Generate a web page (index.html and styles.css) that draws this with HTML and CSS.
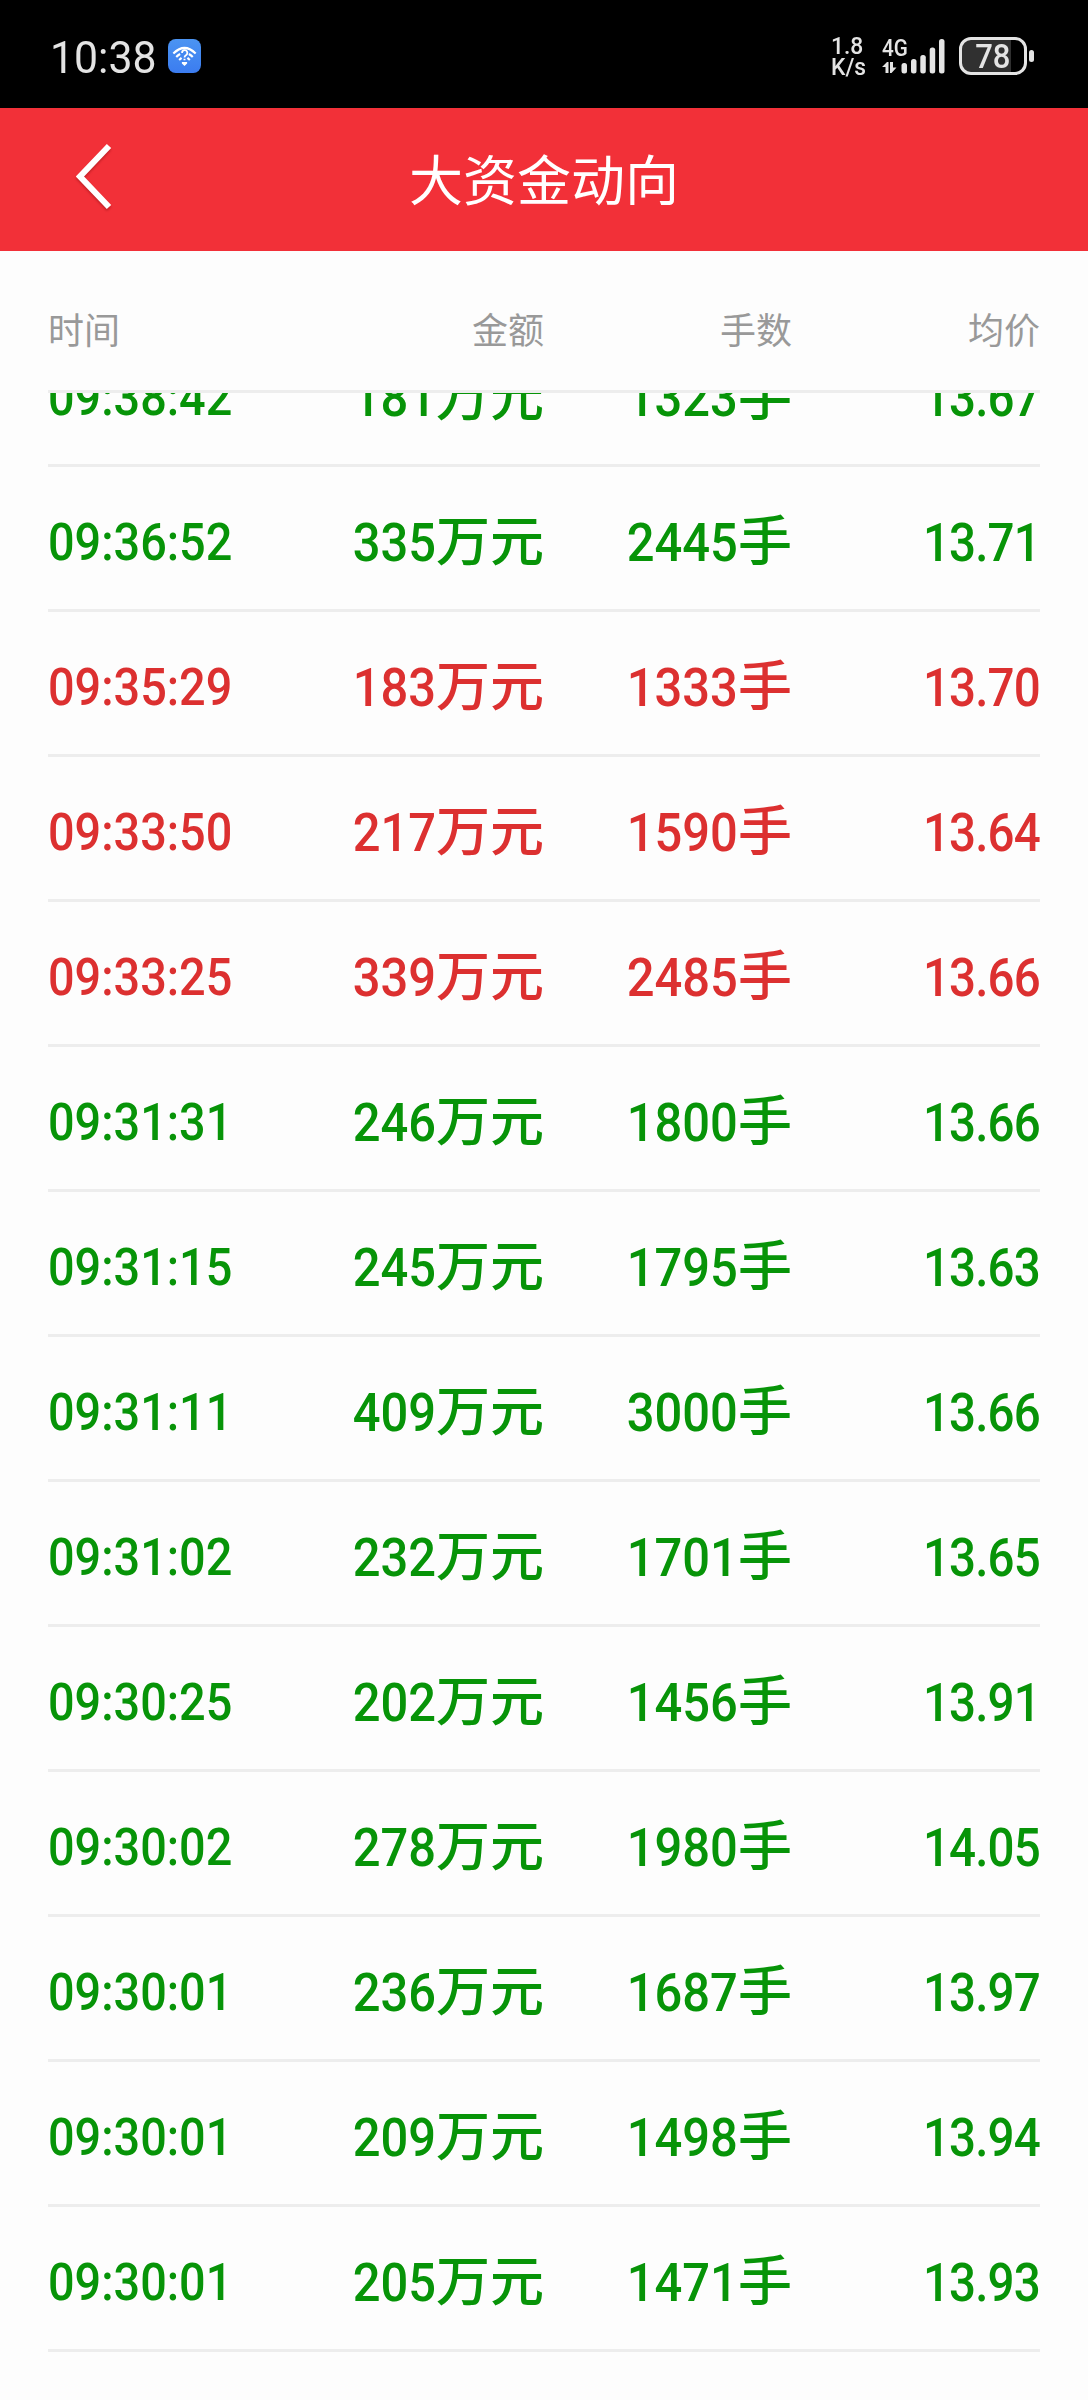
FILE: index.html
```html
<!DOCTYPE html>
<html lang="zh-CN">
<head>
<meta charset="utf-8">
<title>大资金动向</title>
<link rel="stylesheet" href="styles.css">
</head>
<body>
<div class="status">
  <div class="clock"><span>10:38</span></div>
  <svg class="wifi" width="33" height="34" viewBox="0 0 34 34" preserveAspectRatio="none">
    <defs><linearGradient id="g" x1="0" y1="0" x2="0" y2="1"><stop offset="0" stop-color="#4b94f2"/><stop offset="1" stop-color="#3b7cf0"/></linearGradient></defs>
    <rect width="34" height="34" rx="8" fill="url(#g)"/>
    <g fill="none" stroke="#fff" stroke-width="2.2">
      <path d="M5.500 14.500Q17 3.500 28.500 14.500"/>
      <path d="M8.500 18Q10.500 16 12.500 15M25.500 18Q23.500 16 21.500 15"/>
      <path d="M11.500 21L14 18.800M22.500 21L20 18.800"/>
      <path d="M14.500 14a2.700 2.700 0 1 1 4 2.200q-1.500 .8-1.500 2.300" stroke-width="1.800"/>
    </g>
    <path d="M16 19.800h2v1.500h-2zM14.300 23h5.400v1.500L17 27l-2.700-2.500z" fill="#fff"/>
  </svg>
  <div class="speed"><span>1.8</span><span>K/s</span></div>
  <div class="signal">
    <span class="net">4G</span>
    <svg width="64" height="37" viewBox="0 0 64 37">
      <g fill="#e4e4e4">
        <path d="M0 29L5 24H6.500V35H3.500V29zM14.500 29.500L9.500 35H8V24H11V29.500z"/>
        <rect x="19.500" y="25" width="5.500" height="10.500" rx="2.500"/>
        <rect x="29" y="21" width="5.500" height="14.500" rx="2.500"/>
        <rect x="38.300" y="17" width="5.500" height="18.500" rx="2.500"/>
        <rect x="47.700" y="9.500" width="5.500" height="26" rx="2.500"/>
        <rect x="57" y="1" width="5.500" height="34.500" rx="2.500"/>
      </g>
    </svg>
  </div>
  <div class="battery"><div class="cell"><span>78</span></div><i class="nub"></i></div>
</div>
<header class="nav">
  <svg class="back" width="36" height="68" viewBox="0 0 36 68"><path d="M33 3L4 33.500L33 64" fill="none" stroke="#fff" stroke-width="6"/></svg>
  <h1>大资金动向</h1>
</header>
<div class="grid head"><span>时间</span><span>金额</span><span>手数</span><span>均价</span></div>
<main class="list">
  <div class="grid row down"><span class="t">09:38:42</span><span><b>181</b>万元</span><span><b>1323</b>手</span><span><b class="p">13.67</b></span></div>
  <div class="grid row down"><span class="t">09:36:52</span><span><b>335</b>万元</span><span><b>2445</b>手</span><span><b class="p">13.71</b></span></div>
  <div class="grid row up"><span class="t">09:35:29</span><span><b>183</b>万元</span><span><b>1333</b>手</span><span><b class="p">13.70</b></span></div>
  <div class="grid row up"><span class="t">09:33:50</span><span><b>217</b>万元</span><span><b>1590</b>手</span><span><b class="p">13.64</b></span></div>
  <div class="grid row up"><span class="t">09:33:25</span><span><b>339</b>万元</span><span><b>2485</b>手</span><span><b class="p">13.66</b></span></div>
  <div class="grid row down"><span class="t">09:31:31</span><span><b>246</b>万元</span><span><b>1800</b>手</span><span><b class="p">13.66</b></span></div>
  <div class="grid row down"><span class="t">09:31:15</span><span><b>245</b>万元</span><span><b>1795</b>手</span><span><b class="p">13.63</b></span></div>
  <div class="grid row down"><span class="t">09:31:11</span><span><b>409</b>万元</span><span><b>3000</b>手</span><span><b class="p">13.66</b></span></div>
  <div class="grid row down"><span class="t">09:31:02</span><span><b>232</b>万元</span><span><b>1701</b>手</span><span><b class="p">13.65</b></span></div>
  <div class="grid row down"><span class="t">09:30:25</span><span><b>202</b>万元</span><span><b>1456</b>手</span><span><b class="p">13.91</b></span></div>
  <div class="grid row down"><span class="t">09:30:02</span><span><b>278</b>万元</span><span><b>1980</b>手</span><span><b class="p">14.05</b></span></div>
  <div class="grid row down"><span class="t">09:30:01</span><span><b>236</b>万元</span><span><b>1687</b>手</span><span><b class="p">13.97</b></span></div>
  <div class="grid row down"><span class="t">09:30:01</span><span><b>209</b>万元</span><span><b>1498</b>手</span><span><b class="p">13.94</b></span></div>
  <div class="grid row down"><span class="t">09:30:01</span><span><b>205</b>万元</span><span><b>1471</b>手</span><span><b class="p">13.93</b></span></div>
</main>
</body>
</html>
```
FILE: styles.css
```css
* { box-sizing: border-box; }
body {
  margin: 0;
  width: 1088px;
  height: 2400px;
  overflow: hidden;
  background: #fdfdfd;
  font-family: Roboto, "Noto Sans CJK SC", sans-serif;
}

/* status bar */
.status {
  display: flex;
  align-items: center;
  height: 108px;
  padding: 4px 54px 0 50px;
  background: #000;
  color: #e4e4e4;
}
.clock { width: 118px; padding-top: 3px; font-size: 45px; line-height: 54px; }
.clock span { display: inline-block; transform: scaleX(.95); transform-origin: left; }
.speed {
  display: flex;
  flex-direction: column;
  width: 51px;
  margin-left: auto;
  padding-top: 2px;
  font-size: 24px;
  font-weight: 500;
  line-height: 21px;
  transform: scaleX(.95);
  transform-origin: left;
}
.signal { position: relative; width: 64px; height: 37px; }
.signal svg { display: block; }
.net {
  position: absolute;
  left: 0;
  top: -2px;
  font-size: 24px;
  font-weight: 500;
  line-height: 24px;
  transform: scaleX(.86);
  transform-origin: left;
}
.battery { display: flex; align-items: center; gap: 2px; margin-left: 13px; }
.cell {
  display: flex;
  align-items: center;
  justify-content: center;
  width: 68px;
  height: 38px;
  padding-top: 2px;
  border: 3px solid #e4e4e4;
  border-radius: 12px;
  background: linear-gradient(to right, #303030 49px, transparent 49px);
  font-size: 33px;
  font-weight: 500;
  line-height: 32px;
}
.cell span { transform: scaleX(.94); }
.nub { width: 5px; height: 12px; border-radius: 2.5px; background: #e4e4e4; }

/* title bar */
.nav {
  display: grid;
  grid-template-columns: 112px 1fr 112px;
  align-items: center;
  height: 143px;
  background: #f23038;
  color: #fff;
}
.back { justify-self: end; margin-bottom: 5px; filter: drop-shadow(0 2px 1px rgba(90, 0, 0, .3)); }
.nav h1 { margin: 0; padding-top: 6px; font-size: 54px; font-weight: 400; line-height: 80px; text-align: center; }

/* table */
.grid {
  display: grid;
  grid-template-columns: repeat(4, 248px);
  align-items: center;
  margin: 0 48px;
  border-bottom: 3px solid #ededed;
  text-align: right;
  white-space: nowrap;
}
.grid span:first-child { text-align: left; }
.head { height: 142px; padding-top: 14px; color: #999; font-size: 36px; }
.list { height: 2007px; overflow: hidden; }
.row { height: 145px; padding-top: 9px; font-size: 54px; font-weight: 500; line-height: 80px; }
.row:first-child { margin-top: -71px; }
.row b { display: inline-block; font-weight: 500; transform: scaleX(.905); transform-origin: right; }
.row .p { letter-spacing: -1px; transform: scaleX(.88); }
.row .t { font-size: 52px; transform: scaleX(.9); transform-origin: left; }
.down { color: #079408; }
.up { color: #dc3030; }
```
